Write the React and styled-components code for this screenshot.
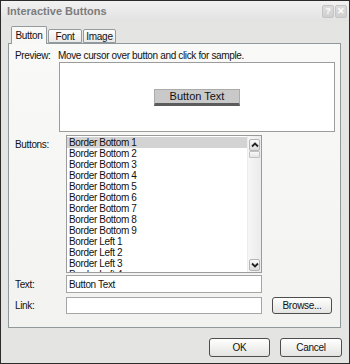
import React from 'react';
import styled, { createGlobalStyle } from 'styled-components';

const GlobalStyle = createGlobalStyle`
  body {
    margin: 0;
    font-family: "Liberation Sans", Arial, sans-serif;
    background: #ffffff;
  }
`;

const Window = styled.div`
  width: 350px;
  height: 364px;
  box-sizing: border-box;
  border: 1px solid #2b2b2b;
  background: #e4e4e2;
  display: flex;
  flex-direction: column;
`;

const TitleBar = styled.div`
  height: 20px;
  display: flex;
  align-items: center;
  justify-content: space-between;
  padding: 0 2px 0 6px;
  background: linear-gradient(#f2f2f2, #e2e2e2);
`;

const TitleText = styled.span`
  font-size: 11px;
  font-weight: bold;
  color: #7c7c7c;
`;

const TitleButtons = styled.div`
  display: flex;
  gap: 1px;
`;

const TitleBtn = styled.div`
  width: 12px;
  height: 13px;
  box-sizing: border-box;
  border: 1px solid #c4c4c4;
  border-radius: 2px;
  background: linear-gradient(#dcdcdc, #cfcfcf);
  color: #ffffff;
  font-size: 9px;
  font-weight: bold;
  display: flex;
  align-items: center;
  justify-content: center;
`;

const Body = styled.div`
  padding: 5px 8px 0 7px;
`;

const TabRow = styled.div`
  display: flex;
  align-items: flex-end;
  gap: 1px;
  padding-left: 3px;
  height: 17px;
`;

const Tab = styled.div`
  width: ${p => p.w}px;
  height: ${p => (p.active ? 18 : 14)}px;
  box-sizing: border-box;
  border: 1px solid #939b9e;
  border-bottom: ${p => (p.active ? 'none' : '1px solid #939b9e')};
  border-radius: 2px 2px 0 0;
  background: ${p => (p.active ? '#f8f8f6' : 'linear-gradient(#fdfdfd, #e9e9e7)')};
  font-size: 10px;
  letter-spacing: -0.3px;
  color: #111;
  display: flex;
  align-items: center;
  justify-content: center;
  margin-bottom: ${p => (p.active ? -1 : 0)}px;
  position: relative;
  z-index: ${p => (p.active ? 2 : 1)};
`;

const Panel = styled.div`
  width: 333px;
  height: 285px;
  box-sizing: border-box;
  border: 1px solid #8f999c;
  background: linear-gradient(#f9f9f8, #f2f2f0);
  padding: 6px 0 0 6px;
  font-size: 10px;
  letter-spacing: -0.35px;
  color: #111;
`;

const PreviewHead = styled.div`
  display: flex;
  height: 11px;
  line-height: 11px;
`;

const PreviewLabel = styled.span`
  width: 43px;
`;

const PreviewBox = styled.div`
  margin: 1px 0 0 44px;
  width: 276px;
  height: 70px;
  box-sizing: border-box;
  border: 1px solid #9c9c9c;
  background: #ffffff;
  display: flex;
  align-items: center;
  justify-content: center;
`;

const SampleButton = styled.div`
  width: 86px;
  height: 17px;
  box-sizing: border-box;
  background: #c9c9c9;
  border: 1px solid #ababab;
  border-bottom: 3px solid #5c5c5c;
  font-size: 11px;
  letter-spacing: 0;
  color: #111;
  display: flex;
  align-items: center;
  justify-content: center;
`;

const FieldRow = styled.div`
  display: flex;
  align-items: ${p => (p.top ? 'flex-start' : 'center')};
  margin-top: ${p => p.mt}px;
`;

const Label = styled.span`
  width: 51px;
  padding-top: ${p => (p.top ? 4 : 0)}px;
`;

const ListBox = styled.div`
  width: 196px;
  height: 138px;
  box-sizing: border-box;
  border: 1px solid #9b9b9b;
  background: #ffffff;
  display: flex;
  overflow: hidden;
`;

const Items = styled.div`
  flex: 1;
  padding-top: 1px;
  overflow: hidden;
`;

const Item = styled.div`
  height: 11px;
  line-height: 11px;
  padding-left: 2px;
  white-space: nowrap;
  background: ${p => (p.selected ? '#d3d3d3' : 'transparent')};
`;

const ScrollBar = styled.div`
  width: 14px;
  box-sizing: border-box;
  background: linear-gradient(90deg, #f6f6f6, #ebebeb);
  border-left: 1px solid #ececec;
  padding: 3px 1px 1px 1px;
  display: flex;
  flex-direction: column;
`;

const ArrowBtn = styled.div`
  height: 12px;
  box-sizing: border-box;
  border: 1px solid #b4b4b4;
  border-radius: 2px;
  background: linear-gradient(#fafafa, #dcdcdc);
  display: flex;
  align-items: center;
  justify-content: center;
`;

const Thumb = styled.div`
  height: 7px;
  box-sizing: border-box;
  border: 1px solid #c2c2c2;
  border-radius: 1px;
  background: linear-gradient(#f8f8f8, #e4e4e4);
`;

const Track = styled.div`
  flex: 1;
`;

const Input = styled.div`
  width: 196px;
  height: ${p => p.h}px;
  box-sizing: border-box;
  border: 1px solid #a5a5a5;
  background: #ffffff;
  padding-left: 2px;
  display: flex;
  align-items: center;
  font-size: 10px;
`;

const PushButton = styled.div`
  width: ${p => p.w}px;
  height: ${p => p.h}px;
  margin-left: ${p => p.ml || 0}px;
  box-sizing: border-box;
  border: 1px solid #4d4d4d;
  border-radius: 3px;
  background: linear-gradient(#ffffff, #e4e4e2);
  font-size: 10px;
  letter-spacing: -0.3px;
  color: #111;
  display: flex;
  align-items: center;
  justify-content: center;
`;

const Footer = styled.div`
  display: flex;
  justify-content: flex-end;
  gap: 10px;
  padding: 10px 7px 0 0;
`;

const Chevron = ({ down }) => (
  <svg width="8" height="6" viewBox="0 0 8 6">
    <path
      d={down ? 'M1 1.5 L4 4.5 L7 1.5' : 'M1 4.5 L4 1.5 L7 4.5'}
      fill="none"
      stroke="#222"
      strokeWidth="1.8"
    />
  </svg>
);

const items = [
  'Border Bottom 1',
  'Border Bottom 2',
  'Border Bottom 3',
  'Border Bottom 4',
  'Border Bottom 5',
  'Border Bottom 6',
  'Border Bottom 7',
  'Border Bottom 8',
  'Border Bottom 9',
  'Border Left 1',
  'Border Left 2',
  'Border Left 3',
  'Border Left 4',
];

export default function App() {
  return (
    <>
      <GlobalStyle />
      <Window>
        <TitleBar>
          <TitleText>Interactive Buttons</TitleText>
          <TitleButtons>
            <TitleBtn>?</TitleBtn>
            <TitleBtn>✕</TitleBtn>
          </TitleButtons>
        </TitleBar>
        <Body>
          <TabRow>
            <Tab active w={36}>Button</Tab>
            <Tab w={34}>Font</Tab>
            <Tab w={33}>Image</Tab>
          </TabRow>
          <Panel>
            <PreviewHead>
              <PreviewLabel>Preview:</PreviewLabel>
              <span>Move cursor over button and click for sample.</span>
            </PreviewHead>
            <PreviewBox>
              <SampleButton>Button Text</SampleButton>
            </PreviewBox>
            <FieldRow top mt={3}>
              <Label top>Buttons:</Label>
              <ListBox>
                <Items>
                  {items.map((it, i) => (
                    <Item key={it} selected={i === 0}>{it}</Item>
                  ))}
                </Items>
                <ScrollBar>
                  <ArrowBtn><Chevron /></ArrowBtn>
                  <Thumb />
                  <Track />
                  <ArrowBtn><Chevron down /></ArrowBtn>
                </ScrollBar>
              </ListBox>
            </FieldRow>
            <FieldRow mt={2}>
              <Label>Text:</Label>
              <Input h={18}>Button Text</Input>
            </FieldRow>
            <FieldRow mt={4}>
              <Label>Link:</Label>
              <Input h={17} />
              <PushButton w={60} h={17} ml={10}>Browse...</PushButton>
            </FieldRow>
          </Panel>
        </Body>
        <Footer>
          <PushButton w={61} h={19}>OK</PushButton>
          <PushButton w={62} h={19}>Cancel</PushButton>
        </Footer>
      </Window>
    </>
  );
}
